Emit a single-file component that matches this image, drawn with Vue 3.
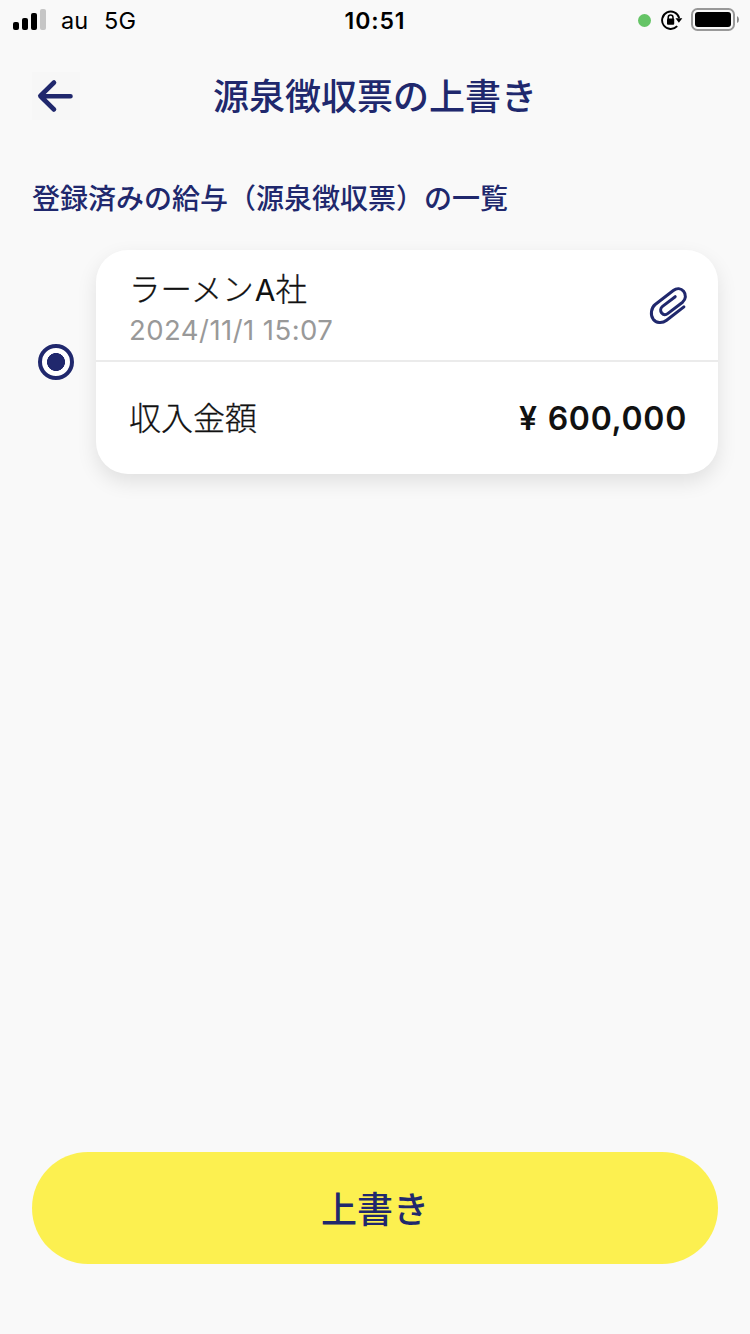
<script setup>
const company = { kana: 'ラーメン', latin: 'A', suffix: '社' }
const registeredAt = '2024/11/1 15:07'
const amount = '600,000'
</script>

<template>
  <div class="screen">
    <div class="status">
      <div class="carrier">
        <svg class="signal" width="34" height="22" viewBox="0 0 34 22">
          <rect x="0" y="13" width="6" height="8" rx="2" />
          <rect x="9" y="9" width="6" height="12" rx="2" />
          <rect x="18" y="4" width="6" height="17" rx="2" />
          <rect x="27" y="0" width="6" height="21" rx="2" fill="#c6c6c6" />
        </svg>
        <span class="name">au</span>
        <span class="network">5G</span>
      </div>
      <div class="clock">10:51</div>
      <div class="indicators">
        <i class="dot"></i>
        <svg class="lock" width="22" height="20" viewBox="0 0 22 20">
          <path d="M16.2 16.2A8.7 8.7 0 1 1 18.2 8" fill="none" stroke="#000" stroke-width="1.9" />
          <path d="M14.500 8.2h6.8L17.900 12.8z" />
          <path d="M7.2 9V7.4a2.4 2.4 0 0 1 4.8 0V9" fill="none" stroke="#000" stroke-width="1.5" />
          <rect x="6" y="8.6" width="7.2" height="6.2" rx="1" />
        </svg>
        <svg class="battery" width="48" height="23" viewBox="0 0 48 23">
          <rect x="1" y="1" width="42" height="21" rx="5.5" fill="none" stroke="#999" stroke-width="2" />
          <rect x="4" y="4" width="36" height="15" rx="3" />
          <path d="M46 8v7q2-1 2-3.5T46 8z" fill="#888" />
        </svg>
      </div>
    </div>

    <header class="header">
      <button class="back" aria-label="戻る">
        <svg width="48" height="48" viewBox="0 0 48 48">
          <path d="M38.5 24.2H8.5M22 10.5L8.3 24L22 37.5" fill="none" stroke="#20286d" stroke-width="4.6" stroke-linecap="round" stroke-linejoin="round" />
        </svg>
      </button>
      <h1>源泉徴収票の上書き</h1>
    </header>

    <main>
      <h2>登録済みの給与（源泉徴収票）の一覧</h2>
      <div class="item">
        <span class="radio"></span>
        <section class="card">
          <div class="top">
            <div>
              <div class="company">{{ company.kana }}<span class="latin">{{ company.latin }}</span>{{ company.suffix }}</div>
              <div class="date">{{ registeredAt }}</div>
            </div>
            <svg class="clip" width="40" height="40" viewBox="0 0 40 40">
              <path d="M34.9 21.9L17.6 35.3C12.8 38.9 7.2 38 4.2 34.2C1.2 30.2 1.900 23 6.200 19.500L24.300 5.500C27.800 2.900 32 3.300 34.600 6.300C37.400 9.700 36.900 14.400 33.600 17.200L19 28.400C16.800 30.100 14.300 29.900 12.700 28C11.100 25.900 11.300 23.200 13.500 21.400L26.200 11.700" fill="none" stroke="#20286d" stroke-width="3" stroke-linecap="round" stroke-linejoin="round" />
            </svg>
          </div>
          <div class="bottom">
            <span class="label">収入金額</span>
            <span class="amount"><span class="yen">¥</span>{{ amount }}</span>
          </div>
        </section>
      </div>
    </main>

    <button class="submit">上書き</button>
  </div>
</template>

<style>
body { background: #f9f9f9; }
</style>

<style scoped>
.screen {
  box-sizing: border-box;
  display: flex;
  flex-direction: column;
  width: 750px;
  height: 1334px;
  padding-bottom: 70px;
  overflow: hidden;
  background: #f9f9f9;
  color: #111;
  font-family: Inter, "Noto Sans CJK JP", sans-serif;
}
.status {
  display: grid;
  grid-template-columns: 1fr auto 1fr;
  align-items: center;
  height: 40px;
  color: #000;
}
.carrier {
  display: flex;
  align-items: center;
  padding-left: 13px;
  font-size: 23.500px;
}
.carrier span { padding-top: 1px; }
.signal { margin-right: 14px; }
.name { margin-right: 16px; }
.clock { padding-top: 1px; font-size: 23px; font-weight: 600; letter-spacing: 0.9px; }
.indicators {
  display: flex;
  align-items: center;
  justify-content: flex-end;
  padding-right: 11px;
}
.dot { width: 13px; height: 13px; margin-right: 10px; border-radius: 50%; background: #65c466; }
.lock { margin-right: 8px; }
.battery { margin-bottom: 1px; }
.header {
  display: grid;
  grid-template-columns: 48px 1fr 48px;
  align-items: center;
  height: 112px;
  padding: 0 32px;
}
button { padding: 0; border: 0; font-family: inherit; color: #20286d; }
.back { width: 48px; height: 48px; background: #f7f7f7; }
.back svg { display: block; }
h1 { margin: 0; padding-top: 2px; color: #20286d; font-size: 36px; font-weight: 500; line-height: 52px; text-align: center; white-space: nowrap; }
main { padding: 26px 32px 0; }
h2 { margin: 0 0 30px; color: #20286d; font-size: 28px; font-weight: 500; line-height: 42px; white-space: nowrap; }
.item { display: flex; align-items: center; gap: 22px; }
.radio {
  box-sizing: border-box;
  width: 36px;
  height: 36px;
  margin-left: 6px;
  border: 4px solid #20286d;
  border-radius: 50%;
  background: radial-gradient(circle, #20286d 8.700px, #fff 9.300px);
}
.card {
  flex: 1;
  border-radius: 32px;
  background: #fff;
  box-shadow: 0 8px 20px rgba(0, 0, 0, .1);
}
.top {
  box-sizing: border-box;
  display: flex;
  justify-content: space-between;
  align-items: center;
  height: 112px;
  padding: 0 29px 0 33px;
  border-bottom: 2px solid #ebebeb;
}
.company { padding-top: 9px; font-size: 31.500px; font-weight: 300; line-height: 40px; -webkit-text-stroke: 0.3px #111; }
.latin { margin-left: 1px; font-size: 30px; font-weight: 400; -webkit-text-stroke: 0; }
.date { color: #999; font-size: 27.500px; font-weight: 400; line-height: 40px; letter-spacing: 0.45px; }
.bottom {
  display: flex;
  justify-content: space-between;
  align-items: center;
  height: 112px;
  padding: 0 31px 0 33px;
}
.label { padding-bottom: 4px; font-size: 32px; font-weight: 300; -webkit-text-stroke: 0.3px #111; }
.amount { font-size: 32px; font-weight: 600; letter-spacing: 0.7px; }
.yen { margin-right: 10px; }
.submit {
  height: 112px;
  margin: auto 32px 0;
  padding-bottom: 2px;
  border-radius: 56px;
  background: #fcf050;
  font-size: 36px;
  font-weight: 500;
}
</style>
